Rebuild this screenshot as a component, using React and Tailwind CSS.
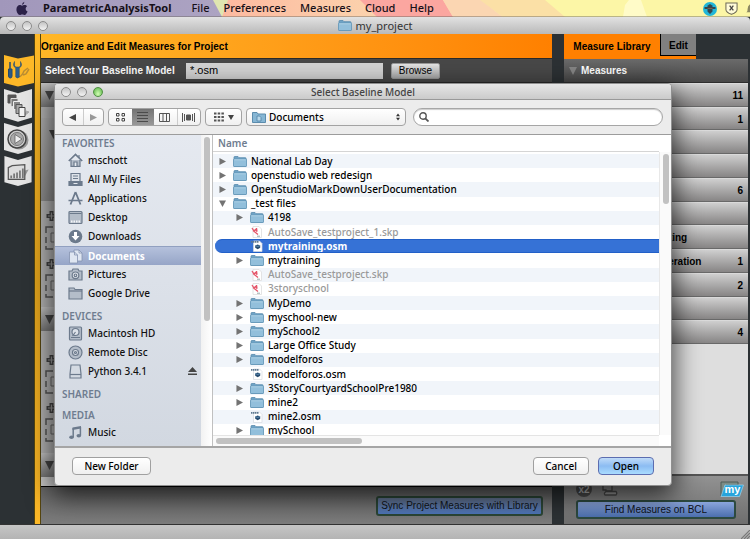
import { useState } from "react";

const lucida = "font-['Noto_Sans','Open_Sans',sans-serif]";
const arial = "font-['Liberation_Sans',Arial,sans-serif]";

const menus = ["File", "Preferences", "Measures", "Cloud", "Help"];

const files = [
  { name: "National Lab Day", depth: 0, kind: "folder" },
  { name: "openstudio web redesign", depth: 0, kind: "folder" },
  { name: "OpenStudioMarkDownUserDocumentation", depth: 0, kind: "folder" },
  { name: "_test files", depth: 0, kind: "folder", open: true },
  { name: "4198", depth: 1, kind: "folder" },
  { name: "AutoSave_testproject_1.skp", depth: 1, kind: "skp" },
  { name: "mytraining.osm", depth: 1, kind: "osm" },
  { name: "mytraining", depth: 1, kind: "folder" },
  { name: "AutoSave_testproject.skp", depth: 1, kind: "skp" },
  { name: "3storyschool", depth: 1, kind: "skp" },
  { name: "MyDemo", depth: 1, kind: "folder" },
  { name: "myschool-new", depth: 1, kind: "folder" },
  { name: "mySchool2", depth: 1, kind: "folder" },
  { name: "Large Office Study", depth: 1, kind: "folder" },
  { name: "modelforos", depth: 1, kind: "folder" },
  { name: "modelforos.osm", depth: 1, kind: "osm" },
  { name: "3StoryCourtyardSchoolPre1980", depth: 1, kind: "folder" },
  { name: "mine2", depth: 1, kind: "folder" },
  { name: "mine2.osm", depth: 1, kind: "osm" },
  { name: "mySchool", depth: 1, kind: "folder" },
];

const favorites = [
  ["mschott", "home"],
  ["All My Files", "files"],
  ["Applications", "apps"],
  ["Desktop", "desktop"],
  ["Downloads", "down"],
  ["Documents", "docs"],
  ["Pictures", "camera"],
  ["Google Drive", "folder"],
];
const devices = [
  ["Macintosh HD", "hd"],
  ["Remote Disc", "disc"],
  ["Python 3.4.1", "drive"],
];

const library = [
  { count: "11" },
  { count: "1" },
  {},
  {},
  { count: "6" },
  {},
  { name: "Service Water Heating" },
  { name: "Onsite Power Generation", count: "1" },
  { count: "2" },
  {},
  { count: "4" },
];

function Folder({ className = "h-[11px] w-[14px]" }) {
  return (
    <svg viewBox="0 0 14 11" className={className} aria-hidden="true">
      <path d="M1 2.5V1.2Q1 .5 1.8.5H5l1 1.2h6.4q.6 0 .6.6V10q0 .5-.5.5h-11Q1 10.500 1 10z" fill="#6fa3c6" stroke="#5b8cad" strokeWidth=".8" />
      <rect x=".5" y="3" width="13" height="7.500" rx=".6" fill="#92bfdb" stroke="#6397b8" strokeWidth=".8" />
      <path d="M1.200 3.800h11.600" stroke="#b9d9ec" strokeWidth=".8" />
    </svg>
  );
}

function FileIcon({ kind }) {
  if (kind === "folder") return <Folder />;
  if (kind === "skp")
    return (
      <svg viewBox="0 0 14 12" className="h-3 w-[14px]" aria-hidden="true">
        <path d="M3 .5h6l2.500 2.500v8.500H3z" fill="#fff" stroke="#ddd" strokeWidth=".8" />
        <path d="M2 2l2 3 1.500-1.500L7 5.500 6.500 2M3 4.500l2.500 2L8 8.500" fill="none" stroke="#e5566a" strokeWidth="1.300" />
        <path d="M7 10.200h3" stroke="#9aa" strokeWidth="1" />
      </svg>
    );
  return (
    <svg viewBox="0 0 14 12" className="h-3 w-[14px]" aria-hidden="true">
      <path d="M3.500 1h6l2.500 2.500V11.500H3.500z" fill="#fff" stroke="#d5dae0" strokeWidth=".7" />
      <path d="M1 1.800h8" stroke="#5d7890" strokeWidth="1.800" strokeDasharray="1.500 .5" />
      <path d="M5.200 5.500l2.500-1 2.500 1v2.300L7.700 9.300 5.200 7.800z" fill="#274c70" />
      <path d="M5.200 5.500l2.500 1 2.500-1" stroke="#6f9fc4" strokeWidth=".8" fill="none" />
    </svg>
  );
}

function SideIcon({ kind, light }) {
  const c = light ? "#eef2f8" : "#6c7a8c";
  const f = light ? "#dfe6f1" : "#b4bdc9";
  const p = { fill: "none", stroke: c, strokeWidth: 1.2 };
  const art = {
    home: (
      <g {...p}>
        <path d="M.8 8L7.500 1.500 14.200 8" strokeWidth="1.700" />
        <path d="M3 7v6.300h9V7" fill={f} />
        <path d="M6 13V9h3v4M11 2v3" fill="#e7ebf1" />
      </g>
    ),
    files: (
      <g {...p}>
        <path d="M3 1.500h9v8H3z" fill="#dde2e9" />
        <path d="M5 4h5M5 6.500h5" />
        <path d="M1 9.500h13v4H1z" fill={c} />
        <path d="M5.500 11.500h4" stroke="#e5e9ef" />
      </g>
    ),
    apps: (
      <g {...p}>
        <path d="M7.500 1L2.500 13.500M7.500 1l5 12.500" strokeWidth="1.800" />
        <path d="M.5 9.500h14" strokeWidth="1.500" />
      </g>
    ),
    desktop: (
      <g {...p}>
        <rect x="1" y="1.500" width="13" height="12" rx="1" fill={f} />
        <path d="M1.500 3.500h12" />
        <path d="M3 11.500h9" stroke="#f3f5f8" strokeWidth="2" strokeDasharray="1.500 1" />
      </g>
    ),
    down: (
      <g>
        <circle cx="7.500" cy="7.500" r="6.800" fill={c} />
        <path d="M6 3h3v4h2.500L7.500 11.500 3.500 7H6z" fill="#fff" />
      </g>
    ),
    docs: (
      <g fill={f} stroke={light ? "#8492b0" : c} strokeWidth=".8">
        <path d="M6 1h5l3 3v8H6z" />
        <path d="M1.500 3h5l3 3v8h-8z" />
        <path d="M6.500 3v3h3M11 1v3h3" fill="none" />
      </g>
    ),
    camera: (
      <g {...p}>
        <path d="M1 4h3l1-2h5l1 2h3v9H1z" fill={f} />
        <circle cx="7.500" cy="8.300" r="3.300" fill="#e4e8ee" />
        <circle cx="7.500" cy="8.300" r="1.300" />
      </g>
    ),
    folder: (
      <g {...p}>
        <path d="M1 3V2h5l1 1.500h7V13H1z" fill={f} />
        <path d="M1 5h13" />
      </g>
    ),
    hd: (
      <g {...p}>
        <rect x="1.500" y="1" width="12" height="13" rx="1" fill={f} />
        <circle cx="7.500" cy="6" r="3.500" fill="#dce1e8" />
        <path d="M3 11.500h9M7.500 6l-3 4" />
      </g>
    ),
    disc: (
      <g {...p}>
        <circle cx="7.500" cy="7.500" r="6.500" fill={f} />
        <circle cx="7.500" cy="7.500" r="3" fill="#dce1e8" />
        <circle cx="7.500" cy="7.500" r="1" />
      </g>
    ),
    drive: (
      <g {...p}>
        <path d="M3 1h9l1 9v4H2v-4z" fill="#d4dae2" />
        <path d="M2 10.500h11" />
      </g>
    ),
    music: (
      <g fill={c}>
        <path d="M4.500 2.500L13 1v2.500L4.500 5z" />
        <path d="M5.200 3v9M12.400 2v8.500" stroke={c} strokeWidth="1.500" />
        <ellipse cx="3.500" cy="12.200" rx="2.300" ry="1.700" />
        <ellipse cx="10.800" cy="10.800" rx="2.300" ry="1.700" />
      </g>
    ),
  };
  return (
    <svg viewBox="0 0 15 15" className="h-[15px] w-[15px] shrink-0" aria-hidden="true">
      {art[kind]}
    </svg>
  );
}

function Light({ green }) {
  return (
    <span
      className={
        green
          ? "size-[10px] rounded-full border border-[#4f8f43] bg-radial-[at_50%_75%] from-[#d3ffb5] to-[#55b043]"
          : "size-[10px] rounded-full border border-[#8b8b8b] bg-linear-to-b from-[#c4c4c4] to-[#f4f4f4]"
      }
    />
  );
}

function Lights({ green }) {
  return (
    <div className="flex gap-[6px]">
      <Light />
      <Light />
      <Light green={green} />
    </div>
  );
}

function MenuBar() {
  return (
    <header className={`relative h-[17px] shrink-0 overflow-hidden bg-[#fcf6a6] ${lucida}`}>
      <svg className="absolute inset-0 h-full w-full" viewBox="0 0 750 17" preserveAspectRatio="none" aria-hidden="true">
        <defs>
          <linearGradient id="violet">
            <stop offset="0" stopColor="#a197bb" />
            <stop offset="1" stopColor="#aca3c2" />
          </linearGradient>
          <linearGradient id="peach">
            <stop offset="0" stopColor="#fdb9a0" />
            <stop offset=".6" stopColor="#fbd5ae" />
            <stop offset="1" stopColor="#fbe0b0" />
          </linearGradient>
        </defs>
        <path d="M212 0h20l6 17h-17z" fill="#dfe6b0" />
        <path d="M0 0h213l9 17H0z" fill="url(#violet)" />
        <path d="M228 0h257l15 17H222z" fill="url(#peach)" />
        <path d="M360 0h80l13 17h-76z" fill="#fba6a0" />
        <path d="M435 0h8l10 17h-10z" fill="#fba6a0" />
        <path d="M480 0h65l20 17h-62z" fill="#fbe0a6" />
        <path d="M443 0h37l23 17h-50z" fill="#fbd6b2" />
        <path d="M625 5l4-5h12l6 17h-24z" fill="#fffbc8" />
        <path d="M0 16.500h750" stroke="#6b6560" strokeOpacity=".45" />
      </svg>
      <div className="relative flex h-full items-center pl-4 text-[11px] font-medium text-[#161018]">
        <svg viewBox="0 0 14 16" className="h-[15px] w-3" aria-hidden="true">
          <path d="M9.800 0Q9.900 2.700 7 3.900 7 1.200 9.800 0zM7 4.800C8 4.800 8.700 4 10.200 4c1 0 2.100.5 2.800 1.500-2.500 1.500-2.100 5 .5 6-.8 2-2 4-3.400 4-1 0-1.500-.6-2.800-.6s-1.800.6-2.800.6C2.200 15.500.5 12 .5 9.200.5 5.800 2.500 4 4.400 4c1.200 0 2 .8 2.600.8z" fill="#2b2148" />
        </svg>
        <b className="ml-[15px] font-bold">ParametricAnalysisTool</b>
        <nav className="ml-5 flex gap-[14px]" aria-label="Application menu">
          {menus.map((m) => (
            <button key={m}>{m}</button>
          ))}
        </nav>
        <div className="ml-auto flex items-center gap-2">
          <svg viewBox="0 0 14 14" className="size-[14px]" aria-hidden="true">
            <circle cx="7" cy="7" r="7" fill="#20b6d8" />
            <path d="M4 4l3-2 3 2-1 1h3.500v2H9.500v2.500L7 12 4.500 9.500V7h-3V5H5z" fill="#33464f" />
            <path d="M4.500 6.500h5" stroke="#8a6c52" strokeWidth=".8" />
          </svg>
          <svg viewBox="0 0 14 14" className="size-[13px]" aria-hidden="true">
            <path d="M1 1h12v7q0 3-6 5.300Q1 11 1 8z" fill="#fffbd8" stroke="#6d6a58" strokeWidth="1.100" />
            <path d="M5 4l4 5M9 4L5 9" stroke="#444" strokeWidth="1.400" />
          </svg>
          <svg viewBox="0 0 5 14" className="h-3 w-1" aria-hidden="true">
            <path d="M5 1Q2 3 2 7T0 11h5z" fill="#8c8862" />
          </svg>
        </div>
      </div>
    </header>
  );
}

function Rail() {
  const shape = "M0 0L14 4 28 0V27L14 31 0 27z";
  return (
    <nav className="flex w-[34px] shrink-0 flex-col bg-[#2c3134] pt-[21px]" aria-label="Sections">
      <button aria-label="Measures" className="ml-1 h-8">
        <svg viewBox="0 0 30 32" className="h-8 w-[30px]" aria-hidden="true">
          <path d="M0 0L14 3.500 30 .500V28L14 31.500 0 28z" fill="#fdb827" />
          <path d="M15 22q3-1 5-6l4-3M19 20l3-1 3-5" stroke="#b98c32" strokeWidth="1.500" fill="none" />
          <path d="M6 7v8" stroke="#234a6e" strokeWidth="1.500" />
          <path d="M4.500 14h3.500v7q0 2-1.700 2T4.500 21z" fill="#2b5a85" stroke="#234a6e" />
          <path d="M10.500 6.500q-2.500 4.500 1.200 6.500v9q1.800 2 3.600 0v-9q3.700-2 1.200-6.500v4.500l-1.500 1h-3l-1.500-1z" fill="#2d5f8d" stroke="#234a6e" strokeWidth=".5" />
        </svg>
      </button>
      <button aria-label="Design alternatives" className="ml-1 h-[35px] pt-[2px]">
        <svg viewBox="0 0 28 33" className="h-[33px] w-7" aria-hidden="true">
          <path d={shape} transform="scale(1 1.060)" fill="#e4e4e4" />
          <g strokeWidth="1">
            <path d="M20 27l5-4-3-1" fill="#aaa" stroke="#aaa" />
            <path d="M4 6h8v8H4z" fill="#555" stroke="#555" />
            <path d="M7 9.500h7v8H7z" fill="#777" stroke="#ddd" />
            <path d="M9.500 12.500h7v8h-7z" fill="#888" stroke="#eee" />
            <path d="M12 15.500h6v9h-6z" fill="#aaa" stroke="#555" />
            <path d="M15 18.500h6v9h-6z" fill="#f2f2f2" stroke="#444" />
          </g>
        </svg>
      </button>
      <button aria-label="Run" className="ml-1 h-[33px]">
        <svg viewBox="0 0 28 32" className="h-8 w-7" aria-hidden="true">
          <path d={shape} fill="#e4e4e4" />
          <circle cx="15" cy="17" r="9.500" fill="#999" />
          <circle cx="13" cy="16" r="9" fill="#cfcfcf" stroke="#444" strokeWidth="1.500" />
          <circle cx="13" cy="16" r="6.500" fill="#aaa" stroke="#777" />
          <path d="M11 11.500l7 4.500-7 4.500z" fill="#eee" stroke="#555" strokeWidth=".7" />
        </svg>
      </button>
      <button aria-label="Results" className="ml-1 h-[34px]">
        <svg viewBox="0 0 28 33" className="h-8 w-7" aria-hidden="true">
          <path d={shape} fill="#e4e4e4" />
          <path d="M20 23l5-9-4 1z" fill="#999" />
          <path d="M4 12l4-2 13-1v15H4z" fill="#ddd" stroke="#555" strokeWidth="1.300" />
          <path d="M7 23v-3M10 23v-5M13 23v-6M16 23v-8M19 23v-10" stroke="#777" strokeWidth="1.800" />
        </svg>
      </button>
    </nav>
  );
}

function GroupBar({ className }) {
  return (
    <div className={`flex shrink-0 items-center bg-linear-to-b from-[#c4c4c4] to-[#777] pl-1 text-[#444] ${className}`}>
      <svg viewBox="0 0 9 9" className="size-[9px]" aria-hidden="true">
        <path d="M0 0h9L4.500 9z" fill="currentColor" />
      </svg>
    </div>
  );
}

function DropSlot() {
  return (
    <div className="flex h-12 shrink-0 flex-col pl-1">
      <svg viewBox="0 0 60 48" className="h-12 w-[60px]" aria-hidden="true">
        <path d="M6.500 4v10M1.500 9h10" stroke="#444" strokeWidth="4" />
        <path d="M6.500 5.500v7M3 9h7" stroke="#999" strokeWidth="1.200" />
        <path d="M8 20H1v6M1 30v6M1 39v3h7M14 20h8M14 42h8" fill="none" stroke="#555" strokeWidth="1.500" />
        <path d="M6 26h5v9H6z" fill="none" stroke="#666" />
      </svg>
    </div>
  );
}

function ProjectPanel() {
  return (
    <main className={`flex min-w-0 flex-1 flex-col text-[10px] ${arial}`}>
      <h1 className="flex h-6 shrink-0 items-center bg-linear-to-r from-[#ffb727] to-[#ff8000] text-[10px] font-bold">
        Organize and Edit Measures for Project
      </h1>
      <div className="flex h-[25px] shrink-0 items-center border-y border-[#2a2a2a] bg-[#484848] pl-1">
        <label htmlFor="model" className="w-[133px] font-bold whitespace-nowrap text-white">Select Your Baseline Model</label>
        <input id="model" defaultValue="*.osm" className="ml-2 h-4 w-[197px] bg-[#d3d3d3] px-1 text-[11px] text-black outline-none" />
        <button className="ml-2 h-4 w-[49px] rounded-[2px] border border-[#999] bg-linear-to-b from-[#e4e4e4] to-[#a8a8a8] leading-[13px] text-black">Browse</button>
      </div>
      <section className="flex flex-1 flex-col overflow-hidden bg-[#b4b4b4]">
        <GroupBar className="h-6" />
        <div className="h-[11px] shrink-0" />
        <div className="h-[83px] shrink-0 bg-linear-to-b from-[#b0b0b0] to-[#8c8c8c] pt-3 pl-2">
          <svg viewBox="0 0 9 9" className="size-[9px]" aria-hidden="true">
            <path d="M0 0h9L4.500 9z" fill="#444" />
          </svg>
        </div>
        <div className="h-[6px] shrink-0" />
        <DropSlot />
        <DropSlot />
        <div className="h-1 shrink-0" />
        <GroupBar className="h-6" />
        <div className="h-5 shrink-0" />
        <DropSlot />
        <DropSlot />
        <div className="flex-1" />
        <GroupBar className="h-6" />
        <div className="h-[9px] shrink-0 bg-[#c8c8c8]" />
      </section>
      <footer className="flex h-[38px] shrink-0 items-center justify-end border-t border-black bg-linear-to-b from-[#656565] to-[#7c7c7c] pr-[9px]">
        <button className="h-5 w-[167px] rounded-[3px] border-2 border-[#2b4636] bg-linear-to-b from-[#63738f] to-[#4d75ba] leading-4 whitespace-nowrap text-[#101418]">
          Sync Project Measures with Library
        </button>
      </footer>
    </main>
  );
}

function LibraryPanel() {
  return (
    <aside className={`flex w-[184px] shrink-0 flex-col bg-[#dedede] text-[10px] font-bold ${arial}`}>
      <div className="flex h-[25px] shrink-0 bg-[#2c3134]">
        <button className="w-[96px] bg-[#ff8000] font-bold text-black">Measure Library</button>
        <div className="flex flex-col border-b-[3px] border-[#ff8000]">
          <button className="h-[22px] w-9 border-b border-l border-black bg-[#808080] pt-[2px] font-bold text-black">Edit</button>
        </div>
      </div>
      <h2 className="flex h-6 shrink-0 items-center gap-1 border-b border-[#2e2e2e] bg-linear-to-b from-[#6b6b6b] to-[#484848] pl-[5px] text-[10px] text-white">
        <svg viewBox="0 0 8 8" className="size-2" aria-hidden="true">
          <path d="M0 0h8L4 8z" fill="#858585" />
        </svg>
        Measures
      </h2>
      <ul className="flex h-[261px] shrink-0 flex-col">
        {library.map((row, i) => (
          <li key={i} className="flex flex-1 items-center justify-between border-t border-[#dadada] bg-linear-to-b from-[#cfcfcf] to-[#848282] pr-[5px] pl-[18px] shadow-[inset_0_-1px_0_#696969]">
            <span>{row.name}</span>
            <span>{row.count}</span>
          </li>
        ))}
      </ul>
      <div className="flex-1" />
      <footer className="h-[50px] shrink-0 border-t-2 border-[#555] bg-linear-to-b from-[#929292] to-[#6e6e6e] px-3">
        <div className="flex h-6 items-center pt-px">
          <svg viewBox="0 0 16 16" className="size-4" role="img" aria-label="Duplicate">
            <circle cx="8" cy="8" r="8" fill="#4b4b4b" />
            <text x="8" y="12" textAnchor="middle" fontSize="10" fontWeight="bold" fill="#bbb">x2</text>
          </svg>
          <svg viewBox="0 0 18 16" className="ml-2 h-4 w-[18px]" aria-hidden="true">
            <path d="M3 0h9v10H6V9H3z" fill="#8f8f8f" stroke="#4a4a4a" strokeWidth="1.300" />
            <path d="M6 10.500h10q1.500 1.700 0 3.500H5q-1.500-1.500 1-3.500z" fill="#999" stroke="#4a4a4a" strokeWidth="1.300" />
            <path d="M2 3h4" stroke="#3a5a3a" strokeWidth="3" />
          </svg>
          <svg viewBox="0 0 24 16" className="-mr-2 ml-auto h-4 w-6" role="img" aria-label="my">
            <path d="M1 15V1h17v3H6z" fill="#7c8c86" stroke="#4f5c57" />
            <path d="M5 4h18.500l-4 11.500H1z" fill="#27a4dc" stroke="#9fd4ee" strokeWidth=".7" />
            <text x="12.500" y="12" textAnchor="middle" fontSize="11" fontWeight="bold" fill="#fff">my</text>
          </svg>
        </div>
        <button className="block h-[19px] w-full rounded-[3px] border-2 border-[#2d4a40] bg-linear-to-b from-[#8ba6dc] to-[#4c6fae] leading-[15px] font-normal text-[#0d1118]">
          Find Measures on BCL
        </button>
      </footer>
    </aside>
  );
}

function SideRow({ label, icon, active, eject }) {
  return (
    <li>
      <button
        className={`flex h-[19px] w-full items-center gap-[5px] pr-1 pl-[13px] text-left ${
          active ? "border-t border-[#91a0c0] bg-linear-to-b from-[#b5c1dc] to-[#96a5c7] font-bold text-white" : "text-[#111]"
        }`}
      >
        <SideIcon kind={icon} light={active} />
        <span className="flex-1">{label}</span>
        {eject && (
          <svg viewBox="0 0 9 9" className="size-[9px]" aria-hidden="true">
            <path d="M4.500 0L9 5H0zM0 6.500h9V8H0z" fill="#444" />
          </svg>
        )}
      </button>
    </li>
  );
}

function SideHead({ children }) {
  return <h3 className="pl-[7px] text-[10px] leading-4 font-semibold text-[#6f7d90]">{children}</h3>;
}

const pill = "h-[18px] rounded-[4px] border border-[#a3a3a3] bg-linear-to-b from-white to-[#f0f0f0]";

function Toolbar() {
  return (
    <div className="flex h-[35px] shrink-0 items-center border-b border-[#9c9c9c] bg-[#ececec] px-[7px]">
      <div className={`flex w-[42px] ${pill}`}>
        <button aria-label="Back" className="flex flex-1 items-center justify-center border-r border-[#ccc]">
          <svg viewBox="0 0 8 8" className="size-[7px]"><path d="M8 0v8L0 4z" fill="#444" /></svg>
        </button>
        <button aria-label="Forward" className="flex flex-1 items-center justify-center">
          <svg viewBox="0 0 8 8" className="size-[7px]"><path d="M0 0v8l8-4z" fill="#999" /></svg>
        </button>
      </div>
      <div className={`ml-1 flex w-[93px] overflow-hidden ${pill}`}>
        <button aria-label="Icon view" className="flex flex-1 items-center justify-center">
          <svg viewBox="0 0 11 9" className="h-[9px] w-[11px]" fill="none" stroke="#444"><path d="M1.500 .5h2.500v2.500h-2.500zM7 .5h2.500v2.500h-2.500zM1.500 5.500h2.500v2.500h-2.500zM7 5.500h2.500v2.500h-2.500z" /></svg>
        </button>
        <button aria-label="List view" className="flex flex-1 items-center justify-center bg-linear-to-b from-[#747474] to-[#989898]">
          <svg viewBox="0 0 11 11" className="size-[11px]" stroke="#4b4b4b"><path d="M0 .5h11M0 3.500h11M0 6.500h11M0 9.500h11" /></svg>
        </button>
        <button aria-label="Column view" className="flex flex-1 items-center justify-center">
          <svg viewBox="0 0 12 9" className="h-[9px] w-3" fill="none" stroke="#555"><path d="M.5.500h10v8H.5zM4 .5v8M7.500 .5v8" /></svg>
        </button>
        <button aria-label="Cover flow" className="flex flex-1 items-center justify-center border-l border-[#ccc]">
          <svg viewBox="0 0 13 9" className="h-[9px] w-[13px]" stroke="#555"><path d="M.5 0v9M2.500 1v7M10.500 1v7M12.500 0v9" /><path d="M4.500 2h4v5h-4z" fill="#555" /></svg>
        </button>
      </div>
      <button aria-label="Arrange" className={`ml-1 flex w-[37px] items-center justify-center gap-1 ${pill}`}>
        <svg viewBox="0 0 10 10" className="size-[10px]" stroke="#555" strokeWidth="2"><path d="M0 1.500h10M0 5h10M0 8.500h10" strokeDasharray="2.500 1.200" /></svg>
        <svg viewBox="0 0 6 5" className="h-[5px] w-[6px]"><path d="M0 0h6L3 5z" fill="#444" /></svg>
      </button>
      <div className={`ml-1 grid w-[160px] grid-cols-[auto_1fr_auto] items-center px-[5px] ${pill}`}>
        <svg viewBox="0 0 14 11" className="h-[11px] w-[14px]" aria-hidden="true">
          <path d="M.5 10.500V.5H5l1 1.500h7.500v8.500z" fill="#86b6d4" stroke="#5b8cad" />
          <path d="M5 4h2.500L9 5.500V9H5z" fill="#b8d8ea" stroke="#4f82a5" strokeWidth=".8" />
        </svg>
        <select aria-label="Location" className="h-4 w-full appearance-none bg-transparent pl-[3px] text-[10px] leading-4 font-medium outline-none">
          <option>Documents</option>
        </select>
        <svg viewBox="0 0 5 9" className="h-2 w-1" aria-hidden="true"><path d="M2.500 0L5 3.500H0zM2.500 9L5 5.500H0z" fill="#333" /></svg>
      </div>
      <label className="ml-[7px] mr-px flex h-[18px] flex-1 items-center rounded-full border border-[#a6a6a6] bg-white pl-[5px] shadow-[inset_0_1px_1px_#ccc]">
        <svg viewBox="0 0 10 10" className="size-[10px]" fill="none" stroke="#555" strokeWidth="1.400"><circle cx="4" cy="4" r="3.200" /><path d="M6.300 6.300L9.500 9.500" strokeWidth="1.800" /></svg>
        <input type="search" aria-label="Search" className="ml-1 min-w-0 flex-1 bg-transparent outline-none" />
      </label>
    </div>
  );
}

function FileRow({ file, odd, selected, onSelect }) {
  const dim = file.kind === "skp";
  const tone = selected
    ? "rounded-l-full bg-[#3672d6] border-y border-[#2260c8] font-bold text-white"
    : odd
      ? "bg-white"
      : "bg-[#f1f5fa]";
  return (
    <li className={`flex min-h-0 flex-1 ${selected ? "pl-[2px]" : ""}`}>
      <button
        disabled={dim}
        onClick={onSelect}
        className={`flex flex-1 items-center overflow-hidden text-left ${tone} ${selected ? "" : "pl-[2px]"} ${dim ? "text-[#999]" : ""}`}
      >
        <span className={`flex shrink-0 items-center ${file.depth ? "w-[35px] pl-[21px]" : "w-[18px] pl-1"}`}>
          {file.kind === "folder" && (
            <svg viewBox="0 0 8 8" className="size-[7px]" aria-hidden="true">
              <path d={file.open ? "M0 .5h8L4 8z" : "M.5 0v8L8 4z"} fill="#737373" />
            </svg>
          )}
        </span>
        <FileIcon kind={file.kind} />
        <span className="ml-1 whitespace-nowrap">{file.name}</span>
      </button>
    </li>
  );
}

function OpenDialog() {
  const [selected, setSelected] = useState("mytraining.osm");
  const action = "h-[18px] rounded-[4px] border leading-4";
  return (
    <div
      role="dialog"
      aria-label="Select Baseline Model"
      className={`absolute top-[83px] right-[78px] left-[54px] flex flex-col overflow-hidden rounded-[4px] border border-[#8f8f8f] bg-[#ececec] text-[10px] font-medium text-black shadow-[0_8px_26px_2px_rgba(0,0,0,0.7)] ${lucida}`}
    >
      <div className="relative flex h-4 shrink-0 items-center border-b border-[#999] bg-linear-to-b from-[#e6e6e6] to-[#cbcbcb] pl-[6px]">
        <Lights green />
        <h2 className="absolute inset-x-0 text-center leading-4 text-[#444]">Select Baseline Model</h2>
      </div>
      <Toolbar />
      <div className="flex h-[313px] border-b-2 border-[#a5a5a5]">
        <div className="w-[146px] shrink-0 overflow-hidden bg-linear-to-b from-[#e5e9f0] to-[#d2d8e1]">
          <div className="h-4"><SideHead>FAVORITES</SideHead></div>
          <ul>
            {favorites.map(([label, icon]) => (
              <SideRow key={label} label={label} icon={icon} active={label === "Documents"} />
            ))}
          </ul>
          <div className="mt-[5px]"><SideHead>DEVICES</SideHead></div>
          <ul>
            {devices.map(([label, icon]) => (
              <SideRow key={label} label={label} icon={icon} eject={icon === "drive"} />
            ))}
          </ul>
          <div className="mt-[5px]"><SideHead>SHARED</SideHead></div>
          <div className="mt-[5px]"><SideHead>MEDIA</SideHead></div>
          <ul><SideRow label="Music" icon="music" /></ul>
        </div>
        <div className="w-3 shrink-0 border-r border-[#c0c0c0] bg-linear-to-r from-[#f2f2f2] to-white pt-[2px]">
          <div className="mx-auto h-[184px] w-[6px] rounded-full bg-[#c1c1c1]" />
        </div>
        <div className="flex min-w-0 flex-1 flex-col bg-white">
          <div className="mr-3 h-[17px] shrink-0 border-b border-[#d5d5d5] pl-[5px] leading-4 font-semibold text-[#6f7d90]">Name</div>
          <div className="flex h-[283px] shrink-0">
            <div className="min-w-0 flex-1 overflow-hidden pt-[2px]">
              <ul className="flex h-[284px] flex-col">
                {files.map((f, i) => (
                  <FileRow key={f.name} file={f} odd={i % 2 === 1} selected={selected === f.name} onSelect={() => setSelected(f.name)} />
                ))}
              </ul>
            </div>
            <div className="w-3 shrink-0 border-l border-[#e8e8e8] bg-[#fafafa] pt-[2px]">
              <div className="mx-auto h-[50px] w-[6px] rounded-full bg-[#c1c1c1]" />
            </div>
          </div>
          <div className="mr-3 flex-1 border-t border-[#e4e4e4] bg-[#fafafa] pt-[2px] pl-[3px]">
            <div className="h-[6px] w-[146px] rounded-full bg-[#c1c1c1]" />
          </div>
        </div>
      </div>
      <div className="flex h-[37px] shrink-0 items-center gap-[9px] pr-[17px] pb-px pl-[17px]">
        <button className={`w-[79px] ${action} border-[#a0a0a0] bg-linear-to-b from-white to-[#f0f0f0]`}>New Folder</button>
        <button className={`ml-auto w-14 ${action} border-[#a0a0a0] bg-linear-to-b from-white to-[#f0f0f0]`}>Cancel</button>
        <button className={`w-14 ${action} border-[#5c6db0] bg-linear-to-b from-[#c0dbf8] via-[#8cbcf2] to-[#a9dcff]`}>Open</button>
      </div>
    </div>
  );
}

export default function App() {
  return (
    <div className="relative flex h-screen flex-col overflow-hidden bg-[#2c3134]">
      <MenuBar />
      <div className={`relative flex h-[17px] shrink-0 items-center rounded-t-[4px] bg-linear-to-b from-[#e2e2e2] to-[#b9b9b9] pl-[6px] text-[11px] text-[#333] ${lucida}`}>
        <Lights />
        <div className="absolute inset-x-0 flex items-center justify-center gap-1">
          <Folder />
          <span className="leading-4">my_project</span>
        </div>
      </div>
      <div className="flex min-h-0 flex-1 pr-[2px]">
        <Rail />
        <div className="w-[7px] shrink-0 border-x border-[#55450f] bg-linear-to-b from-[#fdb827] via-[#e0a21c] to-[#fdb827]" />
        <ProjectPanel />
        <div className="w-3 shrink-0" />
        <LibraryPanel />
      </div>
      <div className="flex h-[15px] shrink-0 items-end justify-end border-t border-[#333] bg-linear-to-b from-[#c6c6c6] to-[#b4b4b4]">
        <svg viewBox="0 0 9 9" className="size-[9px]" aria-hidden="true">
          <path d="M0 9L9 0M3 9l6-6M6 9l3-3" stroke="#777" strokeWidth="1.200" />
        </svg>
      </div>
      <OpenDialog />
    </div>
  );
}
